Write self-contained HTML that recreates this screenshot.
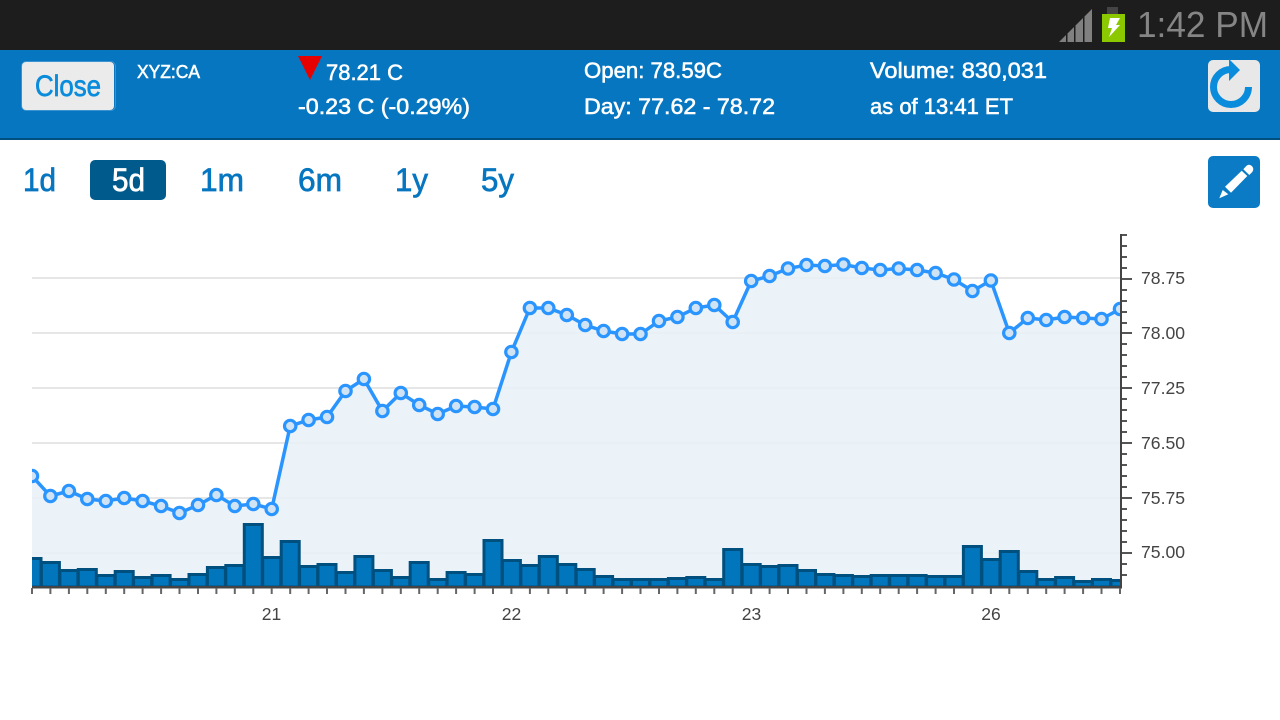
<!DOCTYPE html>
<html><head><meta charset="utf-8"><title>XYZ:CA</title>
<style>
html,body{margin:0;padding:0;width:1280px;height:720px;background:#fff;overflow:hidden}
svg{display:block}
text{font-family:"Liberation Sans",sans-serif}
.h{fill:#fff;stroke:#fff;stroke-width:.55;font-size:22px}
.t{fill:#0676c0;stroke:#0676c0;stroke-width:.7;font-size:32px}
.y{fill:#444;font-size:17.6px}
.x{fill:#444;font-size:17.5px;text-anchor:middle}
.p circle{r:5.7px}
</style></head><body>
<svg width="1280" height="720" viewBox="0 0 1280 720" xmlns="http://www.w3.org/2000/svg">
<defs><clipPath id="c"><rect x="32" y="200" width="1088" height="400"/></clipPath></defs>
<rect width="1280" height="50" fill="#1d1d1d"/>
<polygon points="1059,42 1066,35 1066,42" fill="#808080"/>
<polygon points="1067.500,42 1067.500,33.500 1074,27 1074,42" fill="#808080"/>
<polygon points="1075.500,42 1075.500,25.500 1083,18 1083,42" fill="#808080"/>
<polygon points="1084.500,42 1084.500,16.500 1092,9 1092,42" fill="#808080"/>
<rect x="1107" y="7" width="11" height="7" fill="#444"/>
<rect x="1102" y="14" width="23" height="28" fill="#8cc800"/>
<polygon points="1110,18 1120,18 1116,25 1120,25 1109,37 1112,28 1108,28" fill="#fff"/>
<text x="1137" y="37" font-size="36" fill="#858585" textLength="131" lengthAdjust="spacingAndGlyphs">1:42 PM</text>

<rect y="50" width="1280" height="88" fill="#0676c0"/>
<rect y="138" width="1280" height="2" fill="#00507f"/>
<rect x="21.500" y="61.500" width="94" height="49" rx="5" fill="none" stroke="#3a92d0" stroke-width="1"/>
<rect x="22" y="62" width="92" height="48" rx="4" fill="#ebebeb"/>
<text x="35" y="96" font-size="30" fill="#0a8cdc" stroke="#0a8cdc" stroke-width=".7" textLength="66" lengthAdjust="spacingAndGlyphs">Close</text>
<text x="137" y="78" class="h" style="font-size:18.500px" textLength="63" lengthAdjust="spacingAndGlyphs">XYZ:CA</text>
<polygon points="298,56 322,56 310,80" fill="#e60000"/>
<text x="326" y="80" class="h" textLength="77" lengthAdjust="spacingAndGlyphs">78.21 C</text>
<text x="298" y="114" class="h" textLength="172" lengthAdjust="spacingAndGlyphs">-0.23 C (-0.29%)</text>
<text x="584" y="78" class="h" textLength="138" lengthAdjust="spacingAndGlyphs">Open: 78.59C</text>
<text x="584" y="114" class="h" textLength="191" lengthAdjust="spacingAndGlyphs">Day: 77.62 - 78.72</text>
<text x="870" y="78" class="h" textLength="177" lengthAdjust="spacingAndGlyphs">Volume: 830,031</text>
<text x="870" y="114" class="h" textLength="143" lengthAdjust="spacingAndGlyphs">as of 13:41 ET</text>
<rect x="1208" y="60" width="52" height="52" rx="5" fill="#e8e8e8"/>
<path d="M1248.500 87A17.500 17.500 0 1 1 1231 69.500" fill="none" stroke="#0a8cdc" stroke-width="7"/>
<polygon points="1229,59 1240,70 1229,81" fill="#0a8cdc"/>

<rect x="90" y="160" width="76" height="40" rx="5" fill="#005a8c"/>
<text x="23" y="191" class="t" textLength="33" lengthAdjust="spacingAndGlyphs">1d</text>
<text x="112" y="191" class="t" style="fill:#fff;stroke:#fff" textLength="33" lengthAdjust="spacingAndGlyphs">5d</text>
<text x="200" y="191" class="t" textLength="44" lengthAdjust="spacingAndGlyphs">1m</text>
<text x="298" y="191" class="t" textLength="44" lengthAdjust="spacingAndGlyphs">6m</text>
<text x="395" y="191" class="t" textLength="33" lengthAdjust="spacingAndGlyphs">1y</text>
<text x="481" y="191" class="t" textLength="33" lengthAdjust="spacingAndGlyphs">5y</text>
<rect x="1208" y="156" width="52" height="52" rx="5" fill="#0a7bc4"/>
<polygon points="1219.300,198.300 1222.700,190 1228.300,194.300" fill="#fff"/>
<polygon points="1225,186.700 1231,192.700 1247.300,176 1241.700,170.700" fill="#fff"/>
<path d="M1243.300 169.300L1249.300 175L1252 172.300C1254 170 1253.500 167.500 1251.500 165.800C1249.500 164 1247.500 164.500 1245.800 166.500Z" fill="#fff"/>

<g fill="#e6e6e6">
<rect x="32" y="277" width="1088" height="2"/><rect x="32" y="332" width="1088" height="2"/><rect x="32" y="387" width="1088" height="2"/><rect x="32" y="442" width="1088" height="2"/><rect x="32" y="497" width="1088" height="2"/><rect x="32" y="552" width="1088" height="2"/>
</g>
<g clip-path="url(#c)">
<polygon fill="#e7f0f7" fill-opacity=".85" points="32,587 32,476 50.400,496 68.900,491 87.300,499 105.800,501 124.200,498 142.600,501 161.100,506 179.500,513 198,505 216.400,495 234.800,506 253.300,504 271.700,509 290.200,426 308.600,420 327,417 345.500,391 363.900,379 382.400,411 400.800,393 419.200,405 437.700,414 456.100,406 474.600,407 493,409 511.400,352 529.900,308 548.300,308 566.800,315 585.200,325 603.600,331 622.100,334 640.500,334 659,321 677.400,317 695.800,308 714.300,305 732.700,322 751.200,281 769.600,276 788,268.500 806.500,265 824.900,266 843.400,264.500 861.800,268 880.200,270 898.700,268.500 917.100,270 935.600,273 954,279.500 972.400,291 990.900,280.500 1009.300,333 1027.800,318 1046.200,320 1064.600,317 1083.100,318 1101.500,319 1120,309 1120,587"/>
<polyline fill="none" stroke="#2b95ff" stroke-width="3.500" points="32,476 50.400,496 68.900,491 87.300,499 105.800,501 124.200,498 142.600,501 161.100,506 179.500,513 198,505 216.400,495 234.800,506 253.300,504 271.700,509 290.200,426 308.600,420 327,417 345.500,391 363.900,379 382.400,411 400.800,393 419.200,405 437.700,414 456.100,406 474.600,407 493,409 511.400,352 529.900,308 548.300,308 566.800,315 585.200,325 603.600,331 622.100,334 640.500,334 659,321 677.400,317 695.800,308 714.300,305 732.700,322 751.200,281 769.600,276 788,268.500 806.500,265 824.900,266 843.400,264.500 861.800,268 880.200,270 898.700,268.500 917.100,270 935.600,273 954,279.500 972.400,291 990.900,280.500 1009.300,333 1027.800,318 1046.200,320 1064.600,317 1083.100,318 1101.500,319 1120,309"/>
<g class="p" fill="#cfe3f5" stroke="#2b95ff" stroke-width="3.200">
<circle cx="32" cy="476" r="5.500"/><circle cx="50.400" cy="496" r="5.500"/><circle cx="68.900" cy="491" r="5.500"/><circle cx="87.300" cy="499" r="5.500"/><circle cx="105.800" cy="501" r="5.500"/><circle cx="124.200" cy="498" r="5.500"/><circle cx="142.600" cy="501" r="5.500"/><circle cx="161.100" cy="506" r="5.500"/><circle cx="179.500" cy="513" r="5.500"/><circle cx="198" cy="505" r="5.500"/><circle cx="216.400" cy="495" r="5.500"/><circle cx="234.800" cy="506" r="5.500"/><circle cx="253.300" cy="504" r="5.500"/><circle cx="271.700" cy="509" r="5.500"/><circle cx="290.200" cy="426" r="5.500"/><circle cx="308.600" cy="420" r="5.500"/><circle cx="327" cy="417" r="5.500"/><circle cx="345.500" cy="391" r="5.500"/><circle cx="363.900" cy="379" r="5.500"/><circle cx="382.400" cy="411" r="5.500"/><circle cx="400.800" cy="393" r="5.500"/><circle cx="419.200" cy="405" r="5.500"/><circle cx="437.700" cy="414" r="5.500"/><circle cx="456.100" cy="406" r="5.500"/><circle cx="474.600" cy="407" r="5.500"/><circle cx="493" cy="409" r="5.500"/><circle cx="511.400" cy="352" r="5.500"/><circle cx="529.900" cy="308" r="5.500"/><circle cx="548.300" cy="308" r="5.500"/><circle cx="566.800" cy="315" r="5.500"/><circle cx="585.200" cy="325" r="5.500"/><circle cx="603.600" cy="331" r="5.500"/><circle cx="622.100" cy="334" r="5.500"/><circle cx="640.500" cy="334" r="5.500"/><circle cx="659" cy="321" r="5.500"/><circle cx="677.400" cy="317" r="5.500"/><circle cx="695.800" cy="308" r="5.500"/><circle cx="714.300" cy="305" r="5.500"/><circle cx="732.700" cy="322" r="5.500"/><circle cx="751.200" cy="281" r="5.500"/><circle cx="769.600" cy="276" r="5.500"/><circle cx="788" cy="268.500" r="5.500"/><circle cx="806.500" cy="265" r="5.500"/><circle cx="824.900" cy="266" r="5.500"/><circle cx="843.400" cy="264.500" r="5.500"/><circle cx="861.800" cy="268" r="5.500"/><circle cx="880.200" cy="270" r="5.500"/><circle cx="898.700" cy="268.500" r="5.500"/><circle cx="917.100" cy="270" r="5.500"/><circle cx="935.600" cy="273" r="5.500"/><circle cx="954" cy="279.500" r="5.500"/><circle cx="972.400" cy="291" r="5.500"/><circle cx="990.900" cy="280.500" r="5.500"/><circle cx="1009.300" cy="333" r="5.500"/><circle cx="1027.800" cy="318" r="5.500"/><circle cx="1046.200" cy="320" r="5.500"/><circle cx="1064.600" cy="317" r="5.500"/><circle cx="1083.100" cy="318" r="5.500"/><circle cx="1101.500" cy="319" r="5.500"/><circle cx="1120" cy="309" r="5.500"/>
</g>
<g fill="#0276bd" stroke="#00507f" stroke-width="3">
<path d="M23 587V558.500H41V587Z"/><path d="M41.400 587V562.500H59.400V587Z"/><path d="M59.900 587V570.500H77.900V587Z"/><path d="M78.300 587V569.500H96.300V587Z"/><path d="M96.800 587V575.500H114.800V587Z"/><path d="M115.200 587V571.500H133.200V587Z"/><path d="M133.600 587V577.500H151.600V587Z"/><path d="M152.100 587V575.500H170.100V587Z"/><path d="M170.500 587V579.500H188.500V587Z"/><path d="M189 587V574.500H207V587Z"/><path d="M207.400 587V567.500H225.400V587Z"/><path d="M225.800 587V565.500H243.800V587Z"/><path d="M244.300 587V524.500H262.300V587Z"/><path d="M262.700 587V557.500H280.700V587Z"/><path d="M281.200 587V541.500H299.200V587Z"/><path d="M299.600 587V566.500H317.600V587Z"/><path d="M318 587V564.500H336V587Z"/><path d="M336.500 587V572.500H354.500V587Z"/><path d="M354.900 587V556.500H372.900V587Z"/><path d="M373.400 587V570.500H391.400V587Z"/><path d="M391.800 587V577.500H409.800V587Z"/><path d="M410.200 587V562.500H428.200V587Z"/><path d="M428.700 587V579.500H446.700V587Z"/><path d="M447.100 587V572.500H465.100V587Z"/><path d="M465.600 587V574.500H483.600V587Z"/><path d="M484 587V540.500H502V587Z"/><path d="M502.400 587V560.500H520.400V587Z"/><path d="M520.900 587V565.500H538.900V587Z"/><path d="M539.300 587V556.500H557.300V587Z"/><path d="M557.800 587V564.500H575.800V587Z"/><path d="M576.200 587V569.500H594.200V587Z"/><path d="M594.600 587V576.500H612.600V587Z"/><path d="M613.100 587V579.500H631.100V587Z"/><path d="M631.500 587V579.500H649.500V587Z"/><path d="M650 587V579.500H668V587Z"/><path d="M668.400 587V578.500H686.400V587Z"/><path d="M686.800 587V577.500H704.800V587Z"/><path d="M705.300 587V579.500H723.300V587Z"/><path d="M723.700 587V549.500H741.700V587Z"/><path d="M742.200 587V564.500H760.200V587Z"/><path d="M760.600 587V566.500H778.600V587Z"/><path d="M779 587V565.500H797V587Z"/><path d="M797.500 587V570.500H815.500V587Z"/><path d="M815.900 587V574.500H833.900V587Z"/><path d="M834.400 587V575.500H852.400V587Z"/><path d="M852.800 587V576.500H870.800V587Z"/><path d="M871.200 587V575.500H889.200V587Z"/><path d="M889.700 587V575.500H907.700V587Z"/><path d="M908.100 587V575.500H926.100V587Z"/><path d="M926.600 587V576.500H944.600V587Z"/><path d="M945 587V576.500H963V587Z"/><path d="M963.400 587V546.500H981.400V587Z"/><path d="M981.900 587V559.500H999.900V587Z"/><path d="M1000.300 587V551.500H1018.300V587Z"/><path d="M1018.800 587V571.500H1036.800V587Z"/><path d="M1037.200 587V579.500H1055.200V587Z"/><path d="M1055.600 587V577.500H1073.600V587Z"/><path d="M1074.100 587V581.500H1092.100V587Z"/><path d="M1092.500 587V579.500H1110.500V587Z"/><path d="M1111 587V580.500H1129V587Z"/>
</g>
</g>
<rect x="32" y="586" width="1090" height="2.500" fill="#444"/>
<rect x="1120" y="234" width="2" height="354" fill="#444"/>
<path stroke="#666" stroke-width="2" fill="none" d="M32 588v6M50.400 588v6M68.900 588v6M87.300 588v6M105.800 588v6M124.200 588v6M142.600 588v6M161.100 588v6M179.500 588v6M198 588v6M216.400 588v6M234.800 588v6M253.300 588v6M271.700 588v6M290.200 588v6M308.600 588v6M327 588v6M345.500 588v6M363.900 588v6M382.400 588v6M400.800 588v6M419.200 588v6M437.700 588v6M456.100 588v6M474.600 588v6M493 588v6M511.400 588v6M529.900 588v6M548.300 588v6M566.800 588v6M585.200 588v6M603.600 588v6M622.100 588v6M640.500 588v6M659 588v6M677.400 588v6M695.800 588v6M714.300 588v6M732.700 588v6M751.200 588v6M769.600 588v6M788 588v6M806.500 588v6M824.900 588v6M843.400 588v6M861.800 588v6M880.200 588v6M898.700 588v6M917.100 588v6M935.600 588v6M954 588v6M972.400 588v6M990.900 588v6M1009.300 588v6M1027.800 588v6M1046.200 588v6M1064.600 588v6M1083.100 588v6M1101.500 588v6M1120 588v6"/>
<path stroke="#555" stroke-width="2" fill="none" d="M1122 235h5M1122 246h5M1122 257h5M1122 268h5M1122 279h10M1122 290h5M1122 301h5M1122 312h5M1122 323h5M1122 333h10M1122 344h5M1122 355h5M1122 366h5M1122 377h5M1122 388h10M1122 399h5M1122 410h5M1122 421h5M1122 432h5M1122 443h10M1122 454h5M1122 465h5M1122 476h5M1122 487h5M1122 498h10M1122 509h5M1122 520h5M1122 531h5M1122 542h5M1122 553h10M1122 564h5M1122 575h5"/>
<text x="1141" y="284" class="y">78.75</text>
<text x="1141" y="339" class="y">78.00</text>
<text x="1141" y="394" class="y">77.25</text>
<text x="1141" y="449" class="y">76.50</text>
<text x="1141" y="504" class="y">75.75</text>
<text x="1141" y="558" class="y">75.00</text>
<text x="271.500" y="620" class="x">21</text>
<text x="511.500" y="620" class="x">22</text>
<text x="751.500" y="620" class="x">23</text>
<text x="991" y="620" class="x">26</text>
</svg>
</body></html>
